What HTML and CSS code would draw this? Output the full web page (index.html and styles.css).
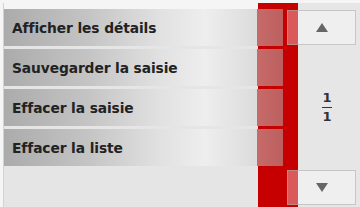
FILE: index.html
```html
<!DOCTYPE html>
<html>
    <head>
        <meta charset="UTF-8">
        <title>Menu</title>
        <link rel="stylesheet" href="styles.css">
    </head>
    <body>
        <div class="screen">
            <!-- liste des actions -->
            <div class="list">
                <div class="row">Afficher les détails</div>
                <div class="row">Sauvegarder la saisie</div>
                <div class="row">Effacer la saisie</div>
                <div class="row">Effacer la liste</div>
            </div>

            <!-- défilement -->
            <div class="side">
                <div class="scroll-button"><span class="arrow-up"></span></div>
                <div class="pager">
                    <span>1</span>
                    <span class="pager-line"></span>
                    <span>1</span>
                </div>
                <div class="scroll-button"><span class="arrow-down"></span></div>
            </div>
        </div>
    </body>
</html>
```

FILE: styles.css
```css
html{
    height: 100%;
}
body{
    margin: 0;
    height: 100%;
    background: #f5f5f5;
    font-family: "DejaVu Sans", Verdana, sans-serif;
    color: #222;
}
.screen{
    display: flex;
    height: 207px;
    padding-left: 3px;
    padding-top: 3px;
    box-sizing: border-box;
}
.list{
    width: 295px;
    display: flex;
    flex-direction: column;
    gap: 3px;
    padding-top: 6px;
    box-sizing: border-box;
    background:
        linear-gradient(to right, transparent 254px, #c60000 254px),
        linear-gradient(to bottom, #f5f5f5 6px, #e5e5e5 6px);
    border-left: 1px solid #d2d2d2;
}
.row{
    width: 279px;
    height: 37px;
    padding-left: 8px;
    box-sizing: border-box;
    display: flex;
    align-items: center;
    font-size: 13.8px;
    font-weight: bold;
    letter-spacing: -0.1px;
    background:
        linear-gradient(to right, transparent 253px, #c66a6a 253px, #bd5f5f 100%),
        linear-gradient(to right, #ababab 0%, #c4c4c4 30%, #e0e0e0 55%, #eeeeee 72%, #d2d2d2 100%);
}
.side{
    width: 73px;
    margin-left: -11px;
    padding: 7px 4px 2px 0;
    box-sizing: border-box;
    display: flex;
    flex-direction: column;
    background:
        linear-gradient(to right, transparent 11px, #e6e6e6 11px);
}
.scroll-button{
    height: 35px;
    display: flex;
    justify-content: center;
    align-items: center;
    background: rgba(255, 255, 255, 0.35);
    border: 1px solid rgba(170, 170, 170, 0.6);
    box-sizing: border-box;
}
.arrow-up{
    width: 0;
    height: 0;
    border-left: 6px solid transparent;
    border-right: 6px solid transparent;
    border-bottom: 9px solid #666;
}
.arrow-down{
    width: 0;
    height: 0;
    border-left: 6px solid transparent;
    border-right: 6px solid transparent;
    border-top: 9px solid #666;
}
.pager{
    flex: 1;
    display: flex;
    flex-direction: column;
    align-items: center;
    justify-content: center;
    padding-left: 11px;
    font-size: 13px;
    font-weight: bold;
    color: #333;
    line-height: 12px;
}
.pager-line{
    width: 10px;
    height: 1px;
    background: #333;
    margin: 3px 0;
}
```
